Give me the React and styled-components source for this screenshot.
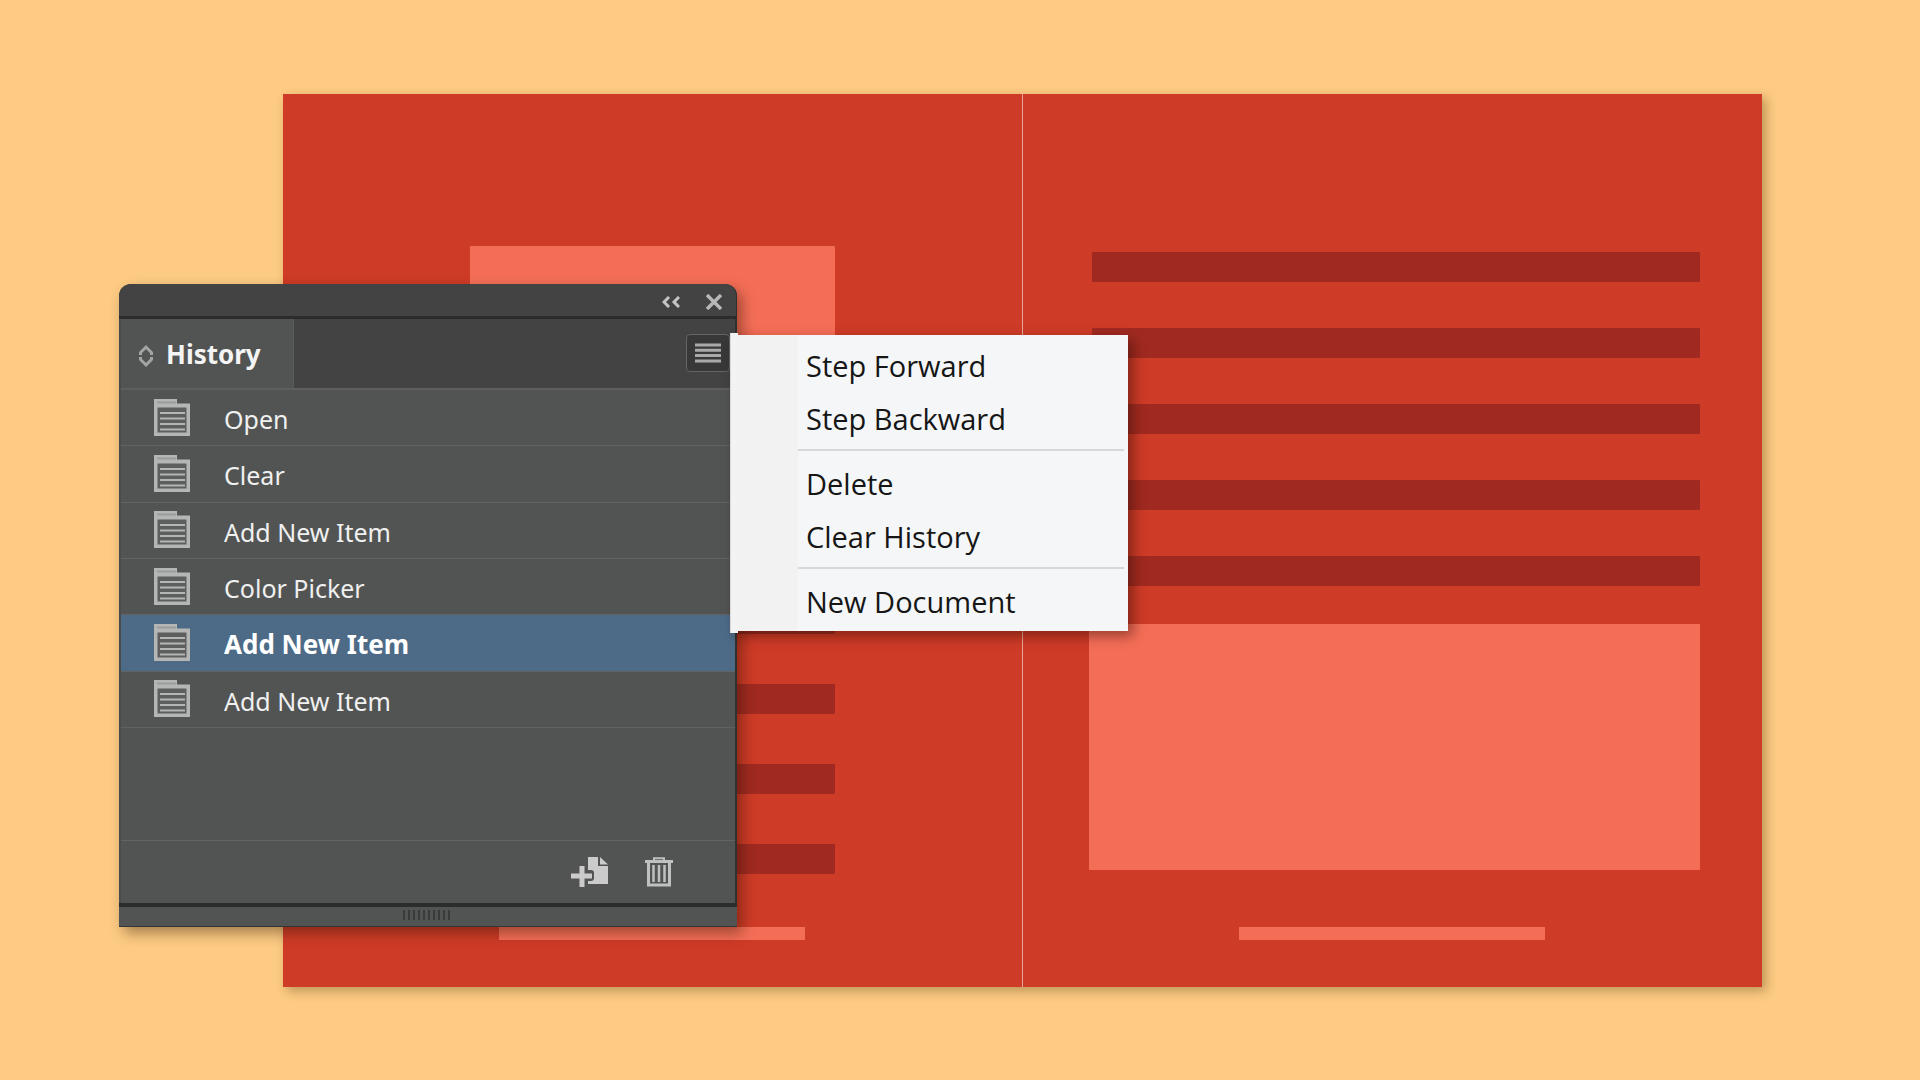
import React,{useState} from 'react'
import styled,{createGlobalStyle} from "styled-components"

const GlobalStyle = createGlobalStyle`
    * {
        box-sizing: border-box;
    }

    body {
        margin: 0;
        background: #fdcb83;
        font-family: "Noto Sans", "Open Sans", sans-serif;
    }

    button {
        margin: 0;
        padding: 0;
        border: 0;
        background: none;
        color: inherit;
        font: inherit;
        text-align: left;
    }

    svg {
        display: block;
    }
`;

//workspace and document
const Workspace = styled.main`
    position: relative;
    display: flex;
    min-height: 100vh;
    padding: 94px 158px 93px 283px;
    overflow: hidden;
`;

const Spread = styled.div`
    flex: 1;
    display: grid;
    grid-template-columns: repeat(2, minmax(0, 1fr));
    background: #ce3b27;
    box-shadow: 4px 4px 10px rgba(70, 50, 10, 0.35);
`;

const Page = styled.section`
    display: flex;
    flex-direction: column;
    justify-content: space-between;
    padding-bottom: 47px;

    &:first-child {
        border-right: 1px solid #e9a79c;
    }
`;

const PageContent = styled.div`
    padding: ${props => props.$side === "left" ? "152px 187px 0" : "158px 62px 0 66px"};
`;

const Picture = styled.div`
    height: ${props => props.$height}px;
    margin-bottom: ${props => props.$gap || 0}px;
    border-radius: 1px;
    background: #f46e57;
`;

const Lines = styled.div`
    display: flex;
    flex-direction: column;
    gap: ${props => props.$gap}px;
    padding-left: ${props => props.$indent || 0}px;
    margin-bottom: ${props => props.$after || 0}px;
`;

const Line = styled.div`
    height: 30px;
    border-radius: 1px;
    background: #a02a21;
`;

const PageFooter = styled.div`
    align-self: center;
    width: 306px;
    height: 13px;
    background: #f46e57;
`;

//history panel
const Panel = styled.section`
    position: absolute;
    top: 284px;
    left: 119px;
    width: 618px;
    border-radius: 12px 12px 0 0;
    background: #525453;
    color: #f4f4f4;
    box-shadow: 5px 6px 14px rgba(40, 20, 0, 0.42);
`;

const TitleBar = styled.header`
    display: flex;
    align-items: center;
    justify-content: flex-end;
    gap: 26px;
    height: 35px;
    padding: 4px 14px 0 0;
    border-right: 1px solid #303030;
    border-bottom: 3px solid #2c2c2c;
    border-radius: 12px 12px 0 0;
    background: #434343;
`;

const PanelBody = styled.div`
    border-left: 2px solid #4a4c4b;
    border-right: 2px solid #303231;
`;

const TabBar = styled.div`
    display: flex;
    justify-content: space-between;
    height: 69px;
    background: #434343;
`;

const Tab = styled.button`
    display: flex;
    align-items: center;
    gap: 13px;
    padding: 0 32px 0 18px;
    border-right: 1px solid #5b5d5c;
    background: #525453;
    font-size: 26px;
    font-weight: 700;

    svg {
        margin-top: 4px;
    }
`;

const MenuButton = styled.button`
    display: flex;
    align-items: center;
    justify-content: center;
    width: 44px;
    height: 38px;
    margin: 15px 5px 0 0;
    border: 1px solid #646464;
    border-radius: 4px;
    background: #383838;
`;

const StateList = styled.ul`
    display: grid;
    grid-auto-rows: 1fr;
    height: 340px;
    margin: 0;
    padding: 0;
    border-top: 2px solid #5d5f5e;
    list-style: none;
`;

const StateRow = styled.button`
    display: flex;
    align-items: center;
    gap: 34px;
    width: 100%;
    height: 100%;
    padding: 3px 0 0 33px;
    border-bottom: 1px solid #616362;
    background: ${props => props.$active ? "#4d6b87" : "transparent"};
    color: ${props => props.$active ? "#ffffff" : "#f0f0f0"};
    font-size: ${props => props.$active ? 26 : 25}px;
    font-weight: ${props => props.$active ? 700 : 400};
    line-height: 34px;

    svg {
        margin-bottom: 4px;
    }
`;

const ActionBar = styled.div`
    display: flex;
    align-items: flex-start;
    justify-content: flex-end;
    gap: 36px;
    height: 63px;
    margin-top: 112px;
    padding: 16px 62px 0 0;
    border-top: 1px solid #626463;
`;

const Grip = styled.div`
    display: flex;
    justify-content: center;
    gap: 3px;
    height: 24px;
    padding: 3px 4px 0 0;
    border-top: 4px solid #2b2d2c;
    border-bottom: 1px solid #333534;

    span {
        width: 2px;
        height: 10px;
        background: #393b3a;
    }
`;

//panel menu
const Menu = styled.div`
    position: absolute;
    top: 335px;
    left: 730px;
    width: 398px;
    padding: 3px 4px 4px 68px;
    background: linear-gradient(90deg, #f2f2f2 68px, #f5f6f8 68px);
    color: #161616;
    font-size: 29px;
    box-shadow: 5px 5px 12px rgba(40, 10, 0, 0.45);

    &::before {
        content: "";
        position: absolute;
        top: -2px;
        bottom: -2px;
        left: 0;
        width: 7px;
        border-left: 1px solid #d9d9d9;
        background: #f3f3f3;
    }
`;

const MenuItem = styled.button`
    display: block;
    width: 100%;
    padding: 2px 0 0 8px;
    font-family: "Open Sans", "Noto Sans", sans-serif;
    line-height: 51px;
`;

const Separator = styled.hr`
    height: 2px;
    margin: 5px 0;
    border: 0;
    background: #d6d8db;
`;

const StateIcon = () => (
    <svg width="36" height="37" viewBox="0 0 36 37" fill="none">
        <path d="M0 0H23V4.500H36V37H0Z" fill="#b4b6b5"/>
        <path d="M3 3.500H22" stroke="#9a9c9b" strokeWidth="2"/>
        <path d="M3.500 8.500H32.500V33.500H3.500Z" fill="#5d5f5e"/>
        <path d="M6 14H31M6 19.500H31M6 25H31M6 30.500H31" stroke="#b4b6b5" strokeWidth="2"/>
    </svg>
)

const CollapseIcon = () => (
    <svg width="18" height="12" viewBox="0 0 18 12" fill="none" stroke="#c4c4c4" strokeWidth="3">
        <path d="M7 1L2 6L7 11M17 1L12 6L17 11"/>
    </svg>
)

const CloseIcon = () => (
    <svg width="16" height="16" viewBox="0 0 16 16" fill="none" stroke="#b8b8b8" strokeWidth="3.400">
        <path d="M1 1L15 15M15 1L1 15"/>
    </svg>
)

const SortIcon = () => (
    <svg width="14" height="24" viewBox="0 0 14 24" fill="none" stroke="#a3a5a4" strokeWidth="3">
        <path d="M1.500 11V8.500L7 3L12.500 8.500V11M1.500 13V15.500L7 21L12.500 15.500V13"/>
    </svg>
)

const LinesIcon = () => (
    <svg width="27" height="20" viewBox="0 0 27 20" stroke="#a9a9a9" strokeWidth="3">
        <path d="M0 2H26M0 7.300H26M0 12.600H26M0 18H26"/>
    </svg>
)

const NewDocIcon = () => (
    <svg width="38" height="30" viewBox="0 0 38 30">
        <path d="M17 0H27V9H37V27H17Z" fill="#cbcbcb"/>
        <path d="M29 0L37 7.500H29Z" fill="#cbcbcb"/>
        <path d="M15 13H20Q23 13 23 16V21Q23 24 20 24H15Z" fill="#525453"/>
        <path d="M0 19H21M11 9V30" stroke="#cbcbcb" strokeWidth="5"/>
    </svg>
)

const TrashIcon = () => (
    <svg width="28" height="30" viewBox="0 0 28 30" fill="none" stroke="#bfc0c0">
        <path d="M9 4V1.200H19V4" strokeWidth="2"/>
        <path d="M0 4.500H28" strokeWidth="3"/>
        <path d="M3.500 5V28H24.500V5" strokeWidth="3"/>
        <path d="M8.500 8V25M14 8V25M19.500 8V25" strokeWidth="2.500"/>
    </svg>
)

const states = ["Open","Clear","Add New Item","Color Picker","Add New Item","Add New Item"]

const menuGroups = [
    ["Step Forward","Step Backward"],
    ["Delete","Clear History"],
    ["New Document"]
]

export default function App() {
    let [active,setActive] = useState(4),
        [menuOpen,setMenuOpen] = useState(true);

    return (
        <Workspace>
            <GlobalStyle/>
            <Spread>
                <Page>
                    <PageContent $side="left">
                        <Picture $height={314} $gap={44}/>
                        <Lines $gap={50}>
                            {[0,1,2,3].map(n => <Line key={n}/>)}
                        </Lines>
                    </PageContent>
                    <PageFooter/>
                </Page>
                <Page>
                    <PageContent $side="right">
                        <Lines $gap={46} $indent={3} $after={38}>
                            {[0,1,2,3,4].map(n => <Line key={n}/>)}
                        </Lines>
                        <Picture $height={246}/>
                    </PageContent>
                    <PageFooter/>
                </Page>
            </Spread>

            <Panel>
                <TitleBar>
                    <button aria-label="Collapse"><CollapseIcon/></button>
                    <button aria-label="Close"><CloseIcon/></button>
                </TitleBar>
                <PanelBody>
                    <TabBar>
                        <Tab><SortIcon/>History</Tab>
                        <MenuButton aria-label="Panel menu" onClick={() => setMenuOpen(!menuOpen)}>
                            <LinesIcon/>
                        </MenuButton>
                    </TabBar>
                    <StateList>
                        {states.map((name,index) => (
                            <li key={index}>
                                <StateRow $active={index === active} onClick={() => setActive(index)}>
                                    <StateIcon/>
                                    {name}
                                </StateRow>
                            </li>
                        ))}
                    </StateList>
                    <ActionBar>
                        <button aria-label="New document from state"><NewDocIcon/></button>
                        <button aria-label="Delete state"><TrashIcon/></button>
                    </ActionBar>
                </PanelBody>
                <Grip>
                    {Array.from({length:10},(_,n) => <span key={n}/>)}
                </Grip>
            </Panel>

            {menuOpen && (
                <Menu role="menu">
                    {menuGroups.map((group,index) => (
                        <React.Fragment key={index}>
                            {index > 0 && <Separator/>}
                            {group.map(label => <MenuItem key={label} role="menuitem">{label}</MenuItem>)}
                        </React.Fragment>
                    ))}
                </Menu>
            )}
        </Workspace>
    )
}
